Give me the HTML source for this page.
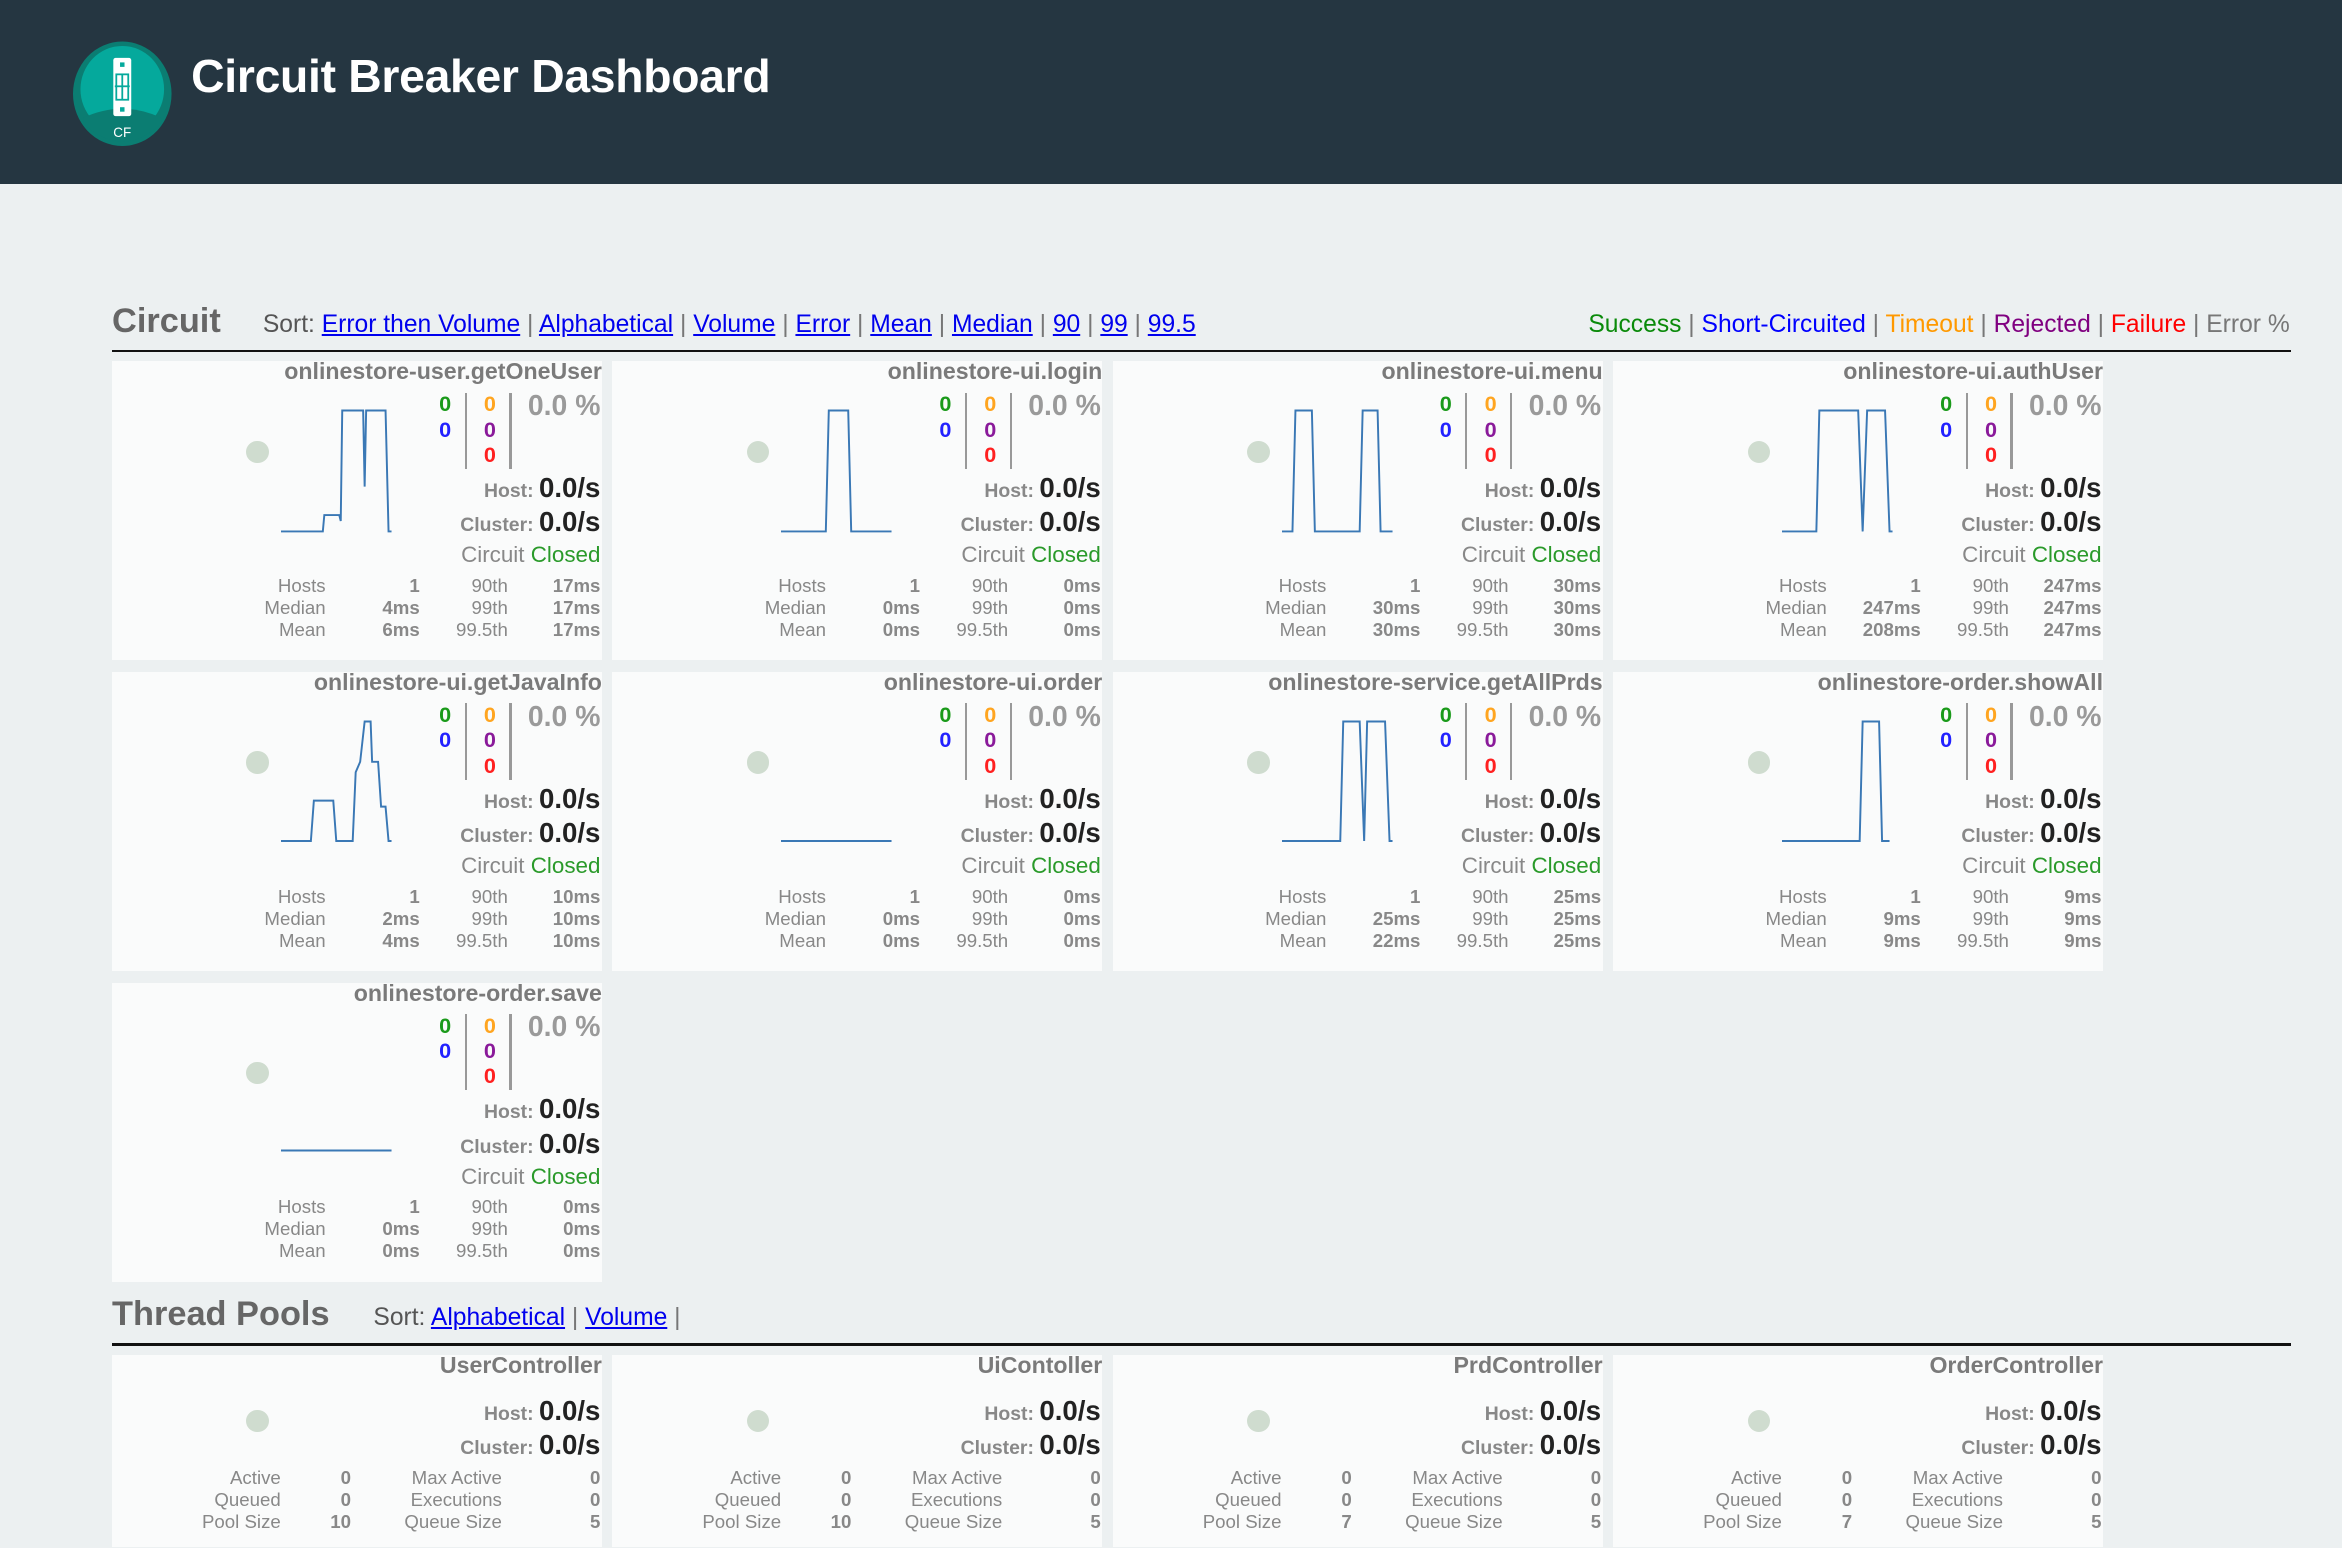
<!DOCTYPE html>
<html><head><meta charset="utf-8"><style>
html,body{margin:0;padding:0;background:#ecf0f1;overflow:hidden}
#w{zoom:1.49362;width:1568px;height:1036px;position:relative;overflow:hidden;background:#ecf0f1;font-family:"Liberation Sans",sans-serif}
#hd{position:absolute;left:0;top:0;width:1568px;height:123px;background:#253641}
#hd h1{position:absolute;left:128px;top:33px;margin:0;color:#fff;font:bold 31px "Liberation Sans",sans-serif;letter-spacing:-0.2px}
.sec{position:absolute;left:75px;color:#666;font:bold 23px "Liberation Sans",sans-serif}
.sort{position:absolute;font-size:16.5px;color:#555}
.sort a{color:#0000ee;text-decoration:underline}
.sort i{font-style:normal;color:#777}
.hr{position:absolute;left:75px;width:1459px;height:2px;background:#111}
.c{position:absolute;width:328px;height:200px;background:#fafbfb}
.c>*{position:absolute}
.t{right:0;top:-2px;font:bold 15.5px "Liberation Sans",sans-serif;color:#7a7a7a;white-space:nowrap}
.dot{left:90px;width:15px;height:15px;border-radius:50%;background:#cfdccf}
.n{font:bold 14.5px "Liberation Sans",sans-serif;width:20px;text-align:center}
.v{width:1.5px;background:#999;top:21px;height:51px}
.pct{right:1px;top:19px;font:bold 19px "Liberation Sans",sans-serif;color:#9a9a9a;white-space:nowrap}
.r{right:1px;white-space:nowrap;font:bold 13px "Liberation Sans",sans-serif;color:#888}
.r b{font-size:18.5px;color:#222}
.cc{right:1px;white-space:nowrap;font-size:15px;color:#888}
.cc span{color:#2a9a2a}
.s{font-size:12.5px;color:#888;text-align:right;white-space:nowrap;line-height:14.7px}
.s.b{font-weight:bold}
</style></head><body><div id="w">
<div id="hd">
<svg style="position:absolute;left:47px;top:27px" width="70" height="72" viewBox="0 0 70 72">
<ellipse cx="35" cy="36" rx="33" ry="35" fill="#0b7d72"/>
<ellipse cx="35" cy="33" rx="28" ry="29" fill="#05a99c"/>
<path d="M9 52 Q35 40 61 52 L61 56 Q35 80 9 56Z" fill="#0b7d72"/>
<rect x="29" y="12" width="12" height="39" rx="1.5" fill="#fff"/>
<rect x="33.5" y="15" width="3" height="3" fill="#05a99c"/>
<rect x="33.5" y="45" width="3" height="3" fill="#05a99c"/>
<rect x="31" y="23" width="8" height="17" fill="none" stroke="#05a99c" stroke-width="1.2"/>
<line x1="30" y1="31" x2="40" y2="31" stroke="#05a99c" stroke-width="1.2"/>
<line x1="35" y1="23" x2="35" y2="40" stroke="#05a99c" stroke-width="1.2"/>
<text x="35" y="65" fill="#fff" font-family="Liberation Sans" font-size="9" text-anchor="middle">CF</text>
</svg>
<h1>Circuit Breaker Dashboard</h1>
</div>

<div class="sec" style="top:202px">Circuit</div>
<div class="sort" style="left:176px;top:208px">Sort: <a>Error then Volume</a> <i>|</i> <a>Alphabetical</a> <i>|</i> <a>Volume</a> <i>|</i> <a>Error</a> <i>|</i> <a>Mean</a> <i>|</i> <a>Median</a> <i>|</i> <a>90</a> <i>|</i> <a>99</a> <i>|</i> <a>99.5</a></div>
<div class="sort" style="right:35px;top:208px"><span style="color:#0a8a0a">Success</span> <i>|</i> <span style="color:#0000ff">Short-Circuited</span> <i>|</i> <span style="color:#ff9900">Timeout</span> <i>|</i> <span style="color:#800080">Rejected</span> <i>|</i> <span style="color:#ff0000">Failure</span> <i>|</i> <span style="color:#777">Error %</span></div>
<div class="hr" style="top:234px"></div>

<!-- Row 1 -->
<div class="c" style="left:75px;top:242px"><div class="t">onlinestore-user.getOneUser</div><div class="dot" style="top:53px"></div>
<svg style="left:113px;top:30px" width="76" height="86"><path d="M0 84H28L29 73H39L40 77L41 3H55L56 54L57 3H70L72 84H74" fill="none" stroke="#3a78b5" stroke-width="1.3"/></svg>
<div class="n" style="left:213px;top:20px;color:#1a9a1a">0</div><div class="n" style="left:213px;top:37px;color:#2222ff">0</div>
<div class="v" style="left:236px"></div><div class="n" style="left:243px;top:20px;color:#ffa520">0</div><div class="n" style="left:243px;top:37px;color:#8a1a9a">0</div><div class="n" style="left:243px;top:54px;color:#ff2020">0</div>
<div class="v" style="left:266px"></div><div class="pct">0.0 %</div>
<div class="r" style="top:74px">Host: <b>0.0/s</b></div><div class="r" style="top:97px">Cluster: <b>0.0/s</b></div>
<div class="cc" style="top:121px">Circuit <span>Closed</span></div>
<div class="s" style="right:185px;top:143px">Hosts<br>Median<br>Mean</div><div class="s b" style="right:122px;top:143px">1<br>4ms<br>6ms</div><div class="s" style="right:63px;top:143px">90th<br>99th<br>99.5th</div><div class="s b" style="right:1px;top:143px">17ms<br>17ms<br>17ms</div></div>

<div class="c" style="left:410px;top:242px"><div class="t">onlinestore-ui.login</div><div class="dot" style="top:53px"></div>
<svg style="left:113px;top:30px" width="76" height="86"><path d="M0 84H30L32 3H45L47 84H74" fill="none" stroke="#3a78b5" stroke-width="1.3"/></svg>
<div class="n" style="left:213px;top:20px;color:#1a9a1a">0</div><div class="n" style="left:213px;top:37px;color:#2222ff">0</div>
<div class="v" style="left:236px"></div><div class="n" style="left:243px;top:20px;color:#ffa520">0</div><div class="n" style="left:243px;top:37px;color:#8a1a9a">0</div><div class="n" style="left:243px;top:54px;color:#ff2020">0</div>
<div class="v" style="left:266px"></div><div class="pct">0.0 %</div>
<div class="r" style="top:74px">Host: <b>0.0/s</b></div><div class="r" style="top:97px">Cluster: <b>0.0/s</b></div>
<div class="cc" style="top:121px">Circuit <span>Closed</span></div>
<div class="s" style="right:185px;top:143px">Hosts<br>Median<br>Mean</div><div class="s b" style="right:122px;top:143px">1<br>0ms<br>0ms</div><div class="s" style="right:63px;top:143px">90th<br>99th<br>99.5th</div><div class="s b" style="right:1px;top:143px">0ms<br>0ms<br>0ms</div></div>

<div class="c" style="left:745px;top:242px"><div class="t">onlinestore-ui.menu</div><div class="dot" style="top:53px"></div>
<svg style="left:113px;top:30px" width="76" height="86"><path d="M0 84H7L9 3H20L22 84H52L54 3H64L66 84H74" fill="none" stroke="#3a78b5" stroke-width="1.3"/></svg>
<div class="n" style="left:213px;top:20px;color:#1a9a1a">0</div><div class="n" style="left:213px;top:37px;color:#2222ff">0</div>
<div class="v" style="left:236px"></div><div class="n" style="left:243px;top:20px;color:#ffa520">0</div><div class="n" style="left:243px;top:37px;color:#8a1a9a">0</div><div class="n" style="left:243px;top:54px;color:#ff2020">0</div>
<div class="v" style="left:266px"></div><div class="pct">0.0 %</div>
<div class="r" style="top:74px">Host: <b>0.0/s</b></div><div class="r" style="top:97px">Cluster: <b>0.0/s</b></div>
<div class="cc" style="top:121px">Circuit <span>Closed</span></div>
<div class="s" style="right:185px;top:143px">Hosts<br>Median<br>Mean</div><div class="s b" style="right:122px;top:143px">1<br>30ms<br>30ms</div><div class="s" style="right:63px;top:143px">90th<br>99th<br>99.5th</div><div class="s b" style="right:1px;top:143px">30ms<br>30ms<br>30ms</div></div>

<div class="c" style="left:1080px;top:242px"><div class="t">onlinestore-ui.authUser</div><div class="dot" style="top:53px"></div>
<svg style="left:113px;top:30px" width="76" height="86"><path d="M0 84H23L25 3H51L54 84L57 3H69L72 84H74" fill="none" stroke="#3a78b5" stroke-width="1.3"/></svg>
<div class="n" style="left:213px;top:20px;color:#1a9a1a">0</div><div class="n" style="left:213px;top:37px;color:#2222ff">0</div>
<div class="v" style="left:236px"></div><div class="n" style="left:243px;top:20px;color:#ffa520">0</div><div class="n" style="left:243px;top:37px;color:#8a1a9a">0</div><div class="n" style="left:243px;top:54px;color:#ff2020">0</div>
<div class="v" style="left:266px"></div><div class="pct">0.0 %</div>
<div class="r" style="top:74px">Host: <b>0.0/s</b></div><div class="r" style="top:97px">Cluster: <b>0.0/s</b></div>
<div class="cc" style="top:121px">Circuit <span>Closed</span></div>
<div class="s" style="right:185px;top:143px">Hosts<br>Median<br>Mean</div><div class="s b" style="right:122px;top:143px">1<br>247ms<br>208ms</div><div class="s" style="right:63px;top:143px">90th<br>99th<br>99.5th</div><div class="s b" style="right:1px;top:143px">247ms<br>247ms<br>247ms</div></div>

<!-- Row 2 -->
<div class="c" style="left:75px;top:450px"><div class="t">onlinestore-ui.getJavaInfo</div><div class="dot" style="top:53px"></div>
<svg style="left:113px;top:30px" width="76" height="86"><path d="M0 83H20L22 56H35L37 83H48L50 37L53 30L56 3H58L60 3L61 30H65L67 60L70 60L72 83H74" fill="none" stroke="#3a78b5" stroke-width="1.3"/></svg>
<div class="n" style="left:213px;top:20px;color:#1a9a1a">0</div><div class="n" style="left:213px;top:37px;color:#2222ff">0</div>
<div class="v" style="left:236px"></div><div class="n" style="left:243px;top:20px;color:#ffa520">0</div><div class="n" style="left:243px;top:37px;color:#8a1a9a">0</div><div class="n" style="left:243px;top:54px;color:#ff2020">0</div>
<div class="v" style="left:266px"></div><div class="pct">0.0 %</div>
<div class="r" style="top:74px">Host: <b>0.0/s</b></div><div class="r" style="top:97px">Cluster: <b>0.0/s</b></div>
<div class="cc" style="top:121px">Circuit <span>Closed</span></div>
<div class="s" style="right:185px;top:143px">Hosts<br>Median<br>Mean</div><div class="s b" style="right:122px;top:143px">1<br>2ms<br>4ms</div><div class="s" style="right:63px;top:143px">90th<br>99th<br>99.5th</div><div class="s b" style="right:1px;top:143px">10ms<br>10ms<br>10ms</div></div>

<div class="c" style="left:410px;top:450px"><div class="t">onlinestore-ui.order</div><div class="dot" style="top:53px"></div>
<svg style="left:113px;top:30px" width="76" height="86"><path d="M0 83H74" fill="none" stroke="#3a78b5" stroke-width="1.3"/></svg>
<div class="n" style="left:213px;top:20px;color:#1a9a1a">0</div><div class="n" style="left:213px;top:37px;color:#2222ff">0</div>
<div class="v" style="left:236px"></div><div class="n" style="left:243px;top:20px;color:#ffa520">0</div><div class="n" style="left:243px;top:37px;color:#8a1a9a">0</div><div class="n" style="left:243px;top:54px;color:#ff2020">0</div>
<div class="v" style="left:266px"></div><div class="pct">0.0 %</div>
<div class="r" style="top:74px">Host: <b>0.0/s</b></div><div class="r" style="top:97px">Cluster: <b>0.0/s</b></div>
<div class="cc" style="top:121px">Circuit <span>Closed</span></div>
<div class="s" style="right:185px;top:143px">Hosts<br>Median<br>Mean</div><div class="s b" style="right:122px;top:143px">1<br>0ms<br>0ms</div><div class="s" style="right:63px;top:143px">90th<br>99th<br>99.5th</div><div class="s b" style="right:1px;top:143px">0ms<br>0ms<br>0ms</div></div>

<div class="c" style="left:745px;top:450px"><div class="t">onlinestore-service.getAllPrds</div><div class="dot" style="top:53px"></div>
<svg style="left:113px;top:30px" width="76" height="86"><path d="M0 83H39L41 3H52L55 83L57 3H69L72 83H74" fill="none" stroke="#3a78b5" stroke-width="1.3"/></svg>
<div class="n" style="left:213px;top:20px;color:#1a9a1a">0</div><div class="n" style="left:213px;top:37px;color:#2222ff">0</div>
<div class="v" style="left:236px"></div><div class="n" style="left:243px;top:20px;color:#ffa520">0</div><div class="n" style="left:243px;top:37px;color:#8a1a9a">0</div><div class="n" style="left:243px;top:54px;color:#ff2020">0</div>
<div class="v" style="left:266px"></div><div class="pct">0.0 %</div>
<div class="r" style="top:74px">Host: <b>0.0/s</b></div><div class="r" style="top:97px">Cluster: <b>0.0/s</b></div>
<div class="cc" style="top:121px">Circuit <span>Closed</span></div>
<div class="s" style="right:185px;top:143px">Hosts<br>Median<br>Mean</div><div class="s b" style="right:122px;top:143px">1<br>25ms<br>22ms</div><div class="s" style="right:63px;top:143px">90th<br>99th<br>99.5th</div><div class="s b" style="right:1px;top:143px">25ms<br>25ms<br>25ms</div></div>

<div class="c" style="left:1080px;top:450px"><div class="t">onlinestore-order.showAll</div><div class="dot" style="top:53px"></div>
<svg style="left:113px;top:30px" width="76" height="86"><path d="M0 83H52L54 3H65L67 83H72" fill="none" stroke="#3a78b5" stroke-width="1.3"/></svg>
<div class="n" style="left:213px;top:20px;color:#1a9a1a">0</div><div class="n" style="left:213px;top:37px;color:#2222ff">0</div>
<div class="v" style="left:236px"></div><div class="n" style="left:243px;top:20px;color:#ffa520">0</div><div class="n" style="left:243px;top:37px;color:#8a1a9a">0</div><div class="n" style="left:243px;top:54px;color:#ff2020">0</div>
<div class="v" style="left:266px"></div><div class="pct">0.0 %</div>
<div class="r" style="top:74px">Host: <b>0.0/s</b></div><div class="r" style="top:97px">Cluster: <b>0.0/s</b></div>
<div class="cc" style="top:121px">Circuit <span>Closed</span></div>
<div class="s" style="right:185px;top:143px">Hosts<br>Median<br>Mean</div><div class="s b" style="right:122px;top:143px">1<br>9ms<br>9ms</div><div class="s" style="right:63px;top:143px">90th<br>99th<br>99.5th</div><div class="s b" style="right:1px;top:143px">9ms<br>9ms<br>9ms</div></div>

<!-- Row 3 -->
<div class="c" style="left:75px;top:658px"><div class="t">onlinestore-order.save</div><div class="dot" style="top:53px"></div>
<svg style="left:113px;top:30px" width="76" height="86"><path d="M0 82H74" fill="none" stroke="#3a78b5" stroke-width="1.3"/></svg>
<div class="n" style="left:213px;top:20px;color:#1a9a1a">0</div><div class="n" style="left:213px;top:37px;color:#2222ff">0</div>
<div class="v" style="left:236px"></div><div class="n" style="left:243px;top:20px;color:#ffa520">0</div><div class="n" style="left:243px;top:37px;color:#8a1a9a">0</div><div class="n" style="left:243px;top:54px;color:#ff2020">0</div>
<div class="v" style="left:266px"></div><div class="pct">0.0 %</div>
<div class="r" style="top:74px">Host: <b>0.0/s</b></div><div class="r" style="top:97px">Cluster: <b>0.0/s</b></div>
<div class="cc" style="top:121px">Circuit <span>Closed</span></div>
<div class="s" style="right:185px;top:143px">Hosts<br>Median<br>Mean</div><div class="s b" style="right:122px;top:143px">1<br>0ms<br>0ms</div><div class="s" style="right:63px;top:143px">90th<br>99th<br>99.5th</div><div class="s b" style="right:1px;top:143px">0ms<br>0ms<br>0ms</div></div>

<div class="sec" style="top:867px">Thread Pools</div>
<div class="sort" style="left:250px;top:873px">Sort: <a>Alphabetical</a> <i>|</i> <a>Volume</a> <i>|</i></div>
<div class="hr" style="top:899px"></div>

<!-- Thread pools -->
<div class="c" style="left:75px;top:907px;height:140px"><div class="t">UserController</div><div class="dot" style="top:37px"></div>
<div class="r" style="top:27px">Host: <b>0.0/s</b></div><div class="r" style="top:50px">Cluster: <b>0.0/s</b></div>
<div class="s" style="right:215px;top:75px">Active<br>Queued<br>Pool Size</div><div class="s b" style="right:168px;top:75px">0<br>0<br>10</div><div class="s" style="right:67px;top:75px">Max Active<br>Executions<br>Queue Size</div><div class="s b" style="right:1px;top:75px">0<br>0<br>5</div></div>

<div class="c" style="left:410px;top:907px;height:140px"><div class="t">UiContoller</div><div class="dot" style="top:37px"></div>
<div class="r" style="top:27px">Host: <b>0.0/s</b></div><div class="r" style="top:50px">Cluster: <b>0.0/s</b></div>
<div class="s" style="right:215px;top:75px">Active<br>Queued<br>Pool Size</div><div class="s b" style="right:168px;top:75px">0<br>0<br>10</div><div class="s" style="right:67px;top:75px">Max Active<br>Executions<br>Queue Size</div><div class="s b" style="right:1px;top:75px">0<br>0<br>5</div></div>

<div class="c" style="left:745px;top:907px;height:140px"><div class="t">PrdController</div><div class="dot" style="top:37px"></div>
<div class="r" style="top:27px">Host: <b>0.0/s</b></div><div class="r" style="top:50px">Cluster: <b>0.0/s</b></div>
<div class="s" style="right:215px;top:75px">Active<br>Queued<br>Pool Size</div><div class="s b" style="right:168px;top:75px">0<br>0<br>7</div><div class="s" style="right:67px;top:75px">Max Active<br>Executions<br>Queue Size</div><div class="s b" style="right:1px;top:75px">0<br>0<br>5</div></div>

<div class="c" style="left:1080px;top:907px;height:140px"><div class="t">OrderController</div><div class="dot" style="top:37px"></div>
<div class="r" style="top:27px">Host: <b>0.0/s</b></div><div class="r" style="top:50px">Cluster: <b>0.0/s</b></div>
<div class="s" style="right:215px;top:75px">Active<br>Queued<br>Pool Size</div><div class="s b" style="right:168px;top:75px">0<br>0<br>7</div><div class="s" style="right:67px;top:75px">Max Active<br>Executions<br>Queue Size</div><div class="s b" style="right:1px;top:75px">0<br>0<br>5</div></div>

</div></body></html>
